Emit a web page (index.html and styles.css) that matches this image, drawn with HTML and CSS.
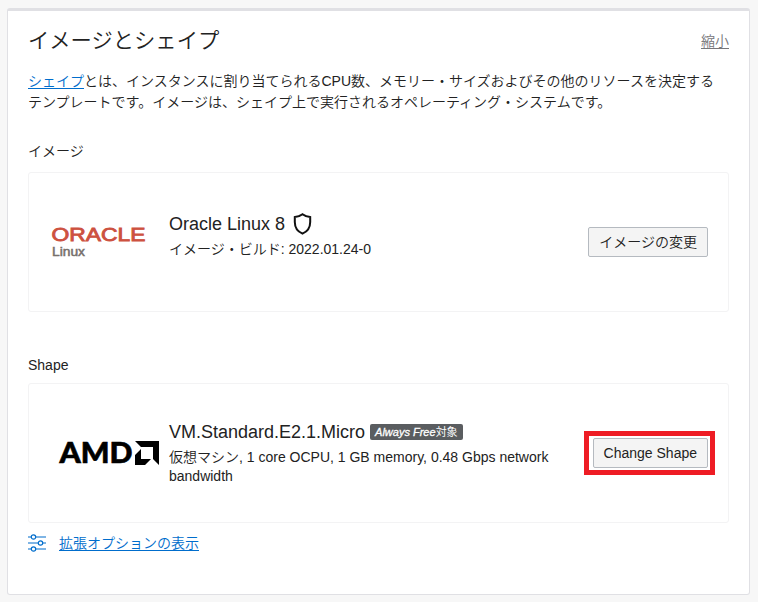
FILE: index.html
```html
<!DOCTYPE html>
<html lang="ja">
<head>
<meta charset="utf-8">
<title>イメージとシェイプ</title>
<link rel="stylesheet" href="styles.css">
</head>
<body>
<section class="panel">
  <header class="panel-header">
    <h2>イメージとシェイプ</h2>
    <a class="collapse" href="#">縮小</a>
  </header>
  <p class="intro"><a href="#">シェイプ</a>とは、インスタンスに割り当てられる<span class="latin">CPU</span>数、メモリー・サイズおよびその他のリソースを決定する<br>テンプレートです。イメージは、シェイプ上で実行されるオペレーティング・システムです。</p>

  <h3 class="label label-image">イメージ</h3>
  <div class="card">
    <svg class="logo" width="140" height="138" viewBox="0 0 140 138">
      <text class="oracle" x="22.500" y="67.500" textLength="94" lengthAdjust="spacingAndGlyphs">ORACLE</text>
      <text class="linux" x="23" y="82.5" textLength="33" lengthAdjust="spacingAndGlyphs">Linux</text>
    </svg>
    <div class="details details-image">
      <div class="name">Oracle Linux 8
        <svg class="shield" width="19" height="22" viewBox="0 0 19 22"><path d="M9.5 1.3 C7.3 3 4.5 4 1.8 4.1 V9 C1.8 14.5 4.5 18.5 9.5 20.7 C14.5 18.5 17.2 14.5 17.2 9 V4.1 C14.5 4 11.7 3 9.5 1.3Z"/></svg>
      </div>
      <div class="meta"><span class="cjk">イメージ・ビルド</span>: 2022.01.24-0</div>
    </div>
    <button class="btn"><span class="cjk">イメージの変更</span></button>
  </div>

  <h3 class="label label-shape">Shape</h3>
  <div class="card card-shape">
    <svg class="logo" width="140" height="138" viewBox="0 0 140 138">
      <text class="amd" x="30.500" y="79" textLength="73" lengthAdjust="spacingAndGlyphs">AMD</text>
      <path d="M106 57h24v24l-6-6V63h-12zM112 65v10h10l-6 6h-10v-10z"/>
    </svg>
    <div class="details details-shape">
      <div class="name">VM.Standard.E2.1.Micro<span class="badge"><i>Always Free</i>対象</span></div>
      <div class="meta"><span class="cjk">仮想マシン</span>, 1 core OCPU, 1 GB memory, 0.48 Gbps network bandwidth</div>
    </div>
    <div class="highlight"><button class="btn">Change Shape</button></div>
  </div>

  <div class="advanced">
    <svg width="18" height="18" viewBox="0 0 18 18"><path d="M0 3h3M8 3h10M0 9h10M15 9h3M0 15h3M8 15h10"/><circle cx="5.500" cy="3" r="2.200"/><circle cx="12.500" cy="9" r="2.200"/><circle cx="5.500" cy="15" r="2.200"/></svg>
    <a class="cjk" href="#">拡張オプションの表示</a>
  </div>
</section>
</body>
</html>
```
FILE: styles.css
```css
* { box-sizing: border-box; }
body {
  margin: 0;
  padding: 8px 8px 7px 7px;
  background: #f7f7f7;
  color: #222;
  font: 14px/20px "Liberation Sans", "Noto Sans CJK JP", sans-serif;
}
a { color: #006dcc; text-underline-offset: 2px; text-decoration-thickness: 1px; }
.cjk { font-weight: 350; }
.latin { font-weight: 400; }
.panel {
  height: 587px;
  padding: 0 20px;
  background: #fff;
  border: 1px solid #e0e0e4;
  border-top-width: 3px;
  border-radius: 3px;
}
.panel-header {
  display: flex;
  justify-content: space-between;
  align-items: center;
  height: 60px;
}
h2 { margin: 0; font-size: 21.3px; font-weight: 350; line-height: 30px; }
a.collapse { color: #76767a; font-weight: 350; }
.intro { margin: 0; line-height: 21px; white-space: nowrap; font-weight: 350; }
.label { margin: 0; font-size: 14px; line-height: 20px; }
.label-image { margin-top: 28px; font-weight: 350; }
.label-shape { margin-top: 43px; font-weight: 400; }
.card {
  display: flex;
  align-items: center;
  height: 140px;
  margin-top: 11px;
  padding-right: 20px;
  border: 1px solid #f3f3f4;
  border-radius: 3px;
}
.card-shape { margin-top: 8px; padding-right: 13px; }
.logo { flex: none; }
.details { width: 400px; }
.details-image { margin-top: -14px; }
.details-image .meta { margin-top: 3px; }
.details-shape { margin-top: -1px; }
.details-shape .meta { margin-top: 3px; }
.name { display: flex; align-items: center; height: 26px; font-size: 18px; }
.meta { line-height: 19px; }
.meta .cjk { display: inline-block; height: 19px; }
.shield { margin-left: 8px; fill: none; stroke: #111; stroke-width: 2; }
.oracle { font: 400 17.5px "Liberation Sans", sans-serif; fill: #cd5140; stroke: #cd5140; stroke-width: .8; }
.linux { font: 400 12.5px "Liberation Sans", sans-serif; fill: #77706c; stroke: #77706c; stroke-width: .5; }
.amd { font: 900 28px Lato, sans-serif; stroke: #000; stroke-width: .6; }
.badge {
  margin-left: 5px;
  padding: 0 5px;
  background: #5a5d60;
  border-radius: 2px;
  color: #fff;
  font-size: 11px;
  line-height: 16px;
}
.badge i { -webkit-text-stroke: .3px #fff; }
.btn {
  display: block;
  height: 30px;
  margin-left: auto;
  padding: 0 10px;
  background: #f4f4f4;
  border: 1px solid #b5bac0;
  border-radius: 2px;
  color: #222;
  font: 14px/20px "Liberation Sans", "Noto Sans CJK JP", sans-serif;
  white-space: nowrap;
}
.highlight {
  margin-left: auto;
  padding: 2px 2px 2px 4px;
  border: 5px solid #ee1c24;
}
.advanced { display: flex; align-items: center; gap: 13px; height: 20px; margin-top: 10px; }
.advanced svg { fill: none; stroke: #006dcc; stroke-width: 1.2; }
```
